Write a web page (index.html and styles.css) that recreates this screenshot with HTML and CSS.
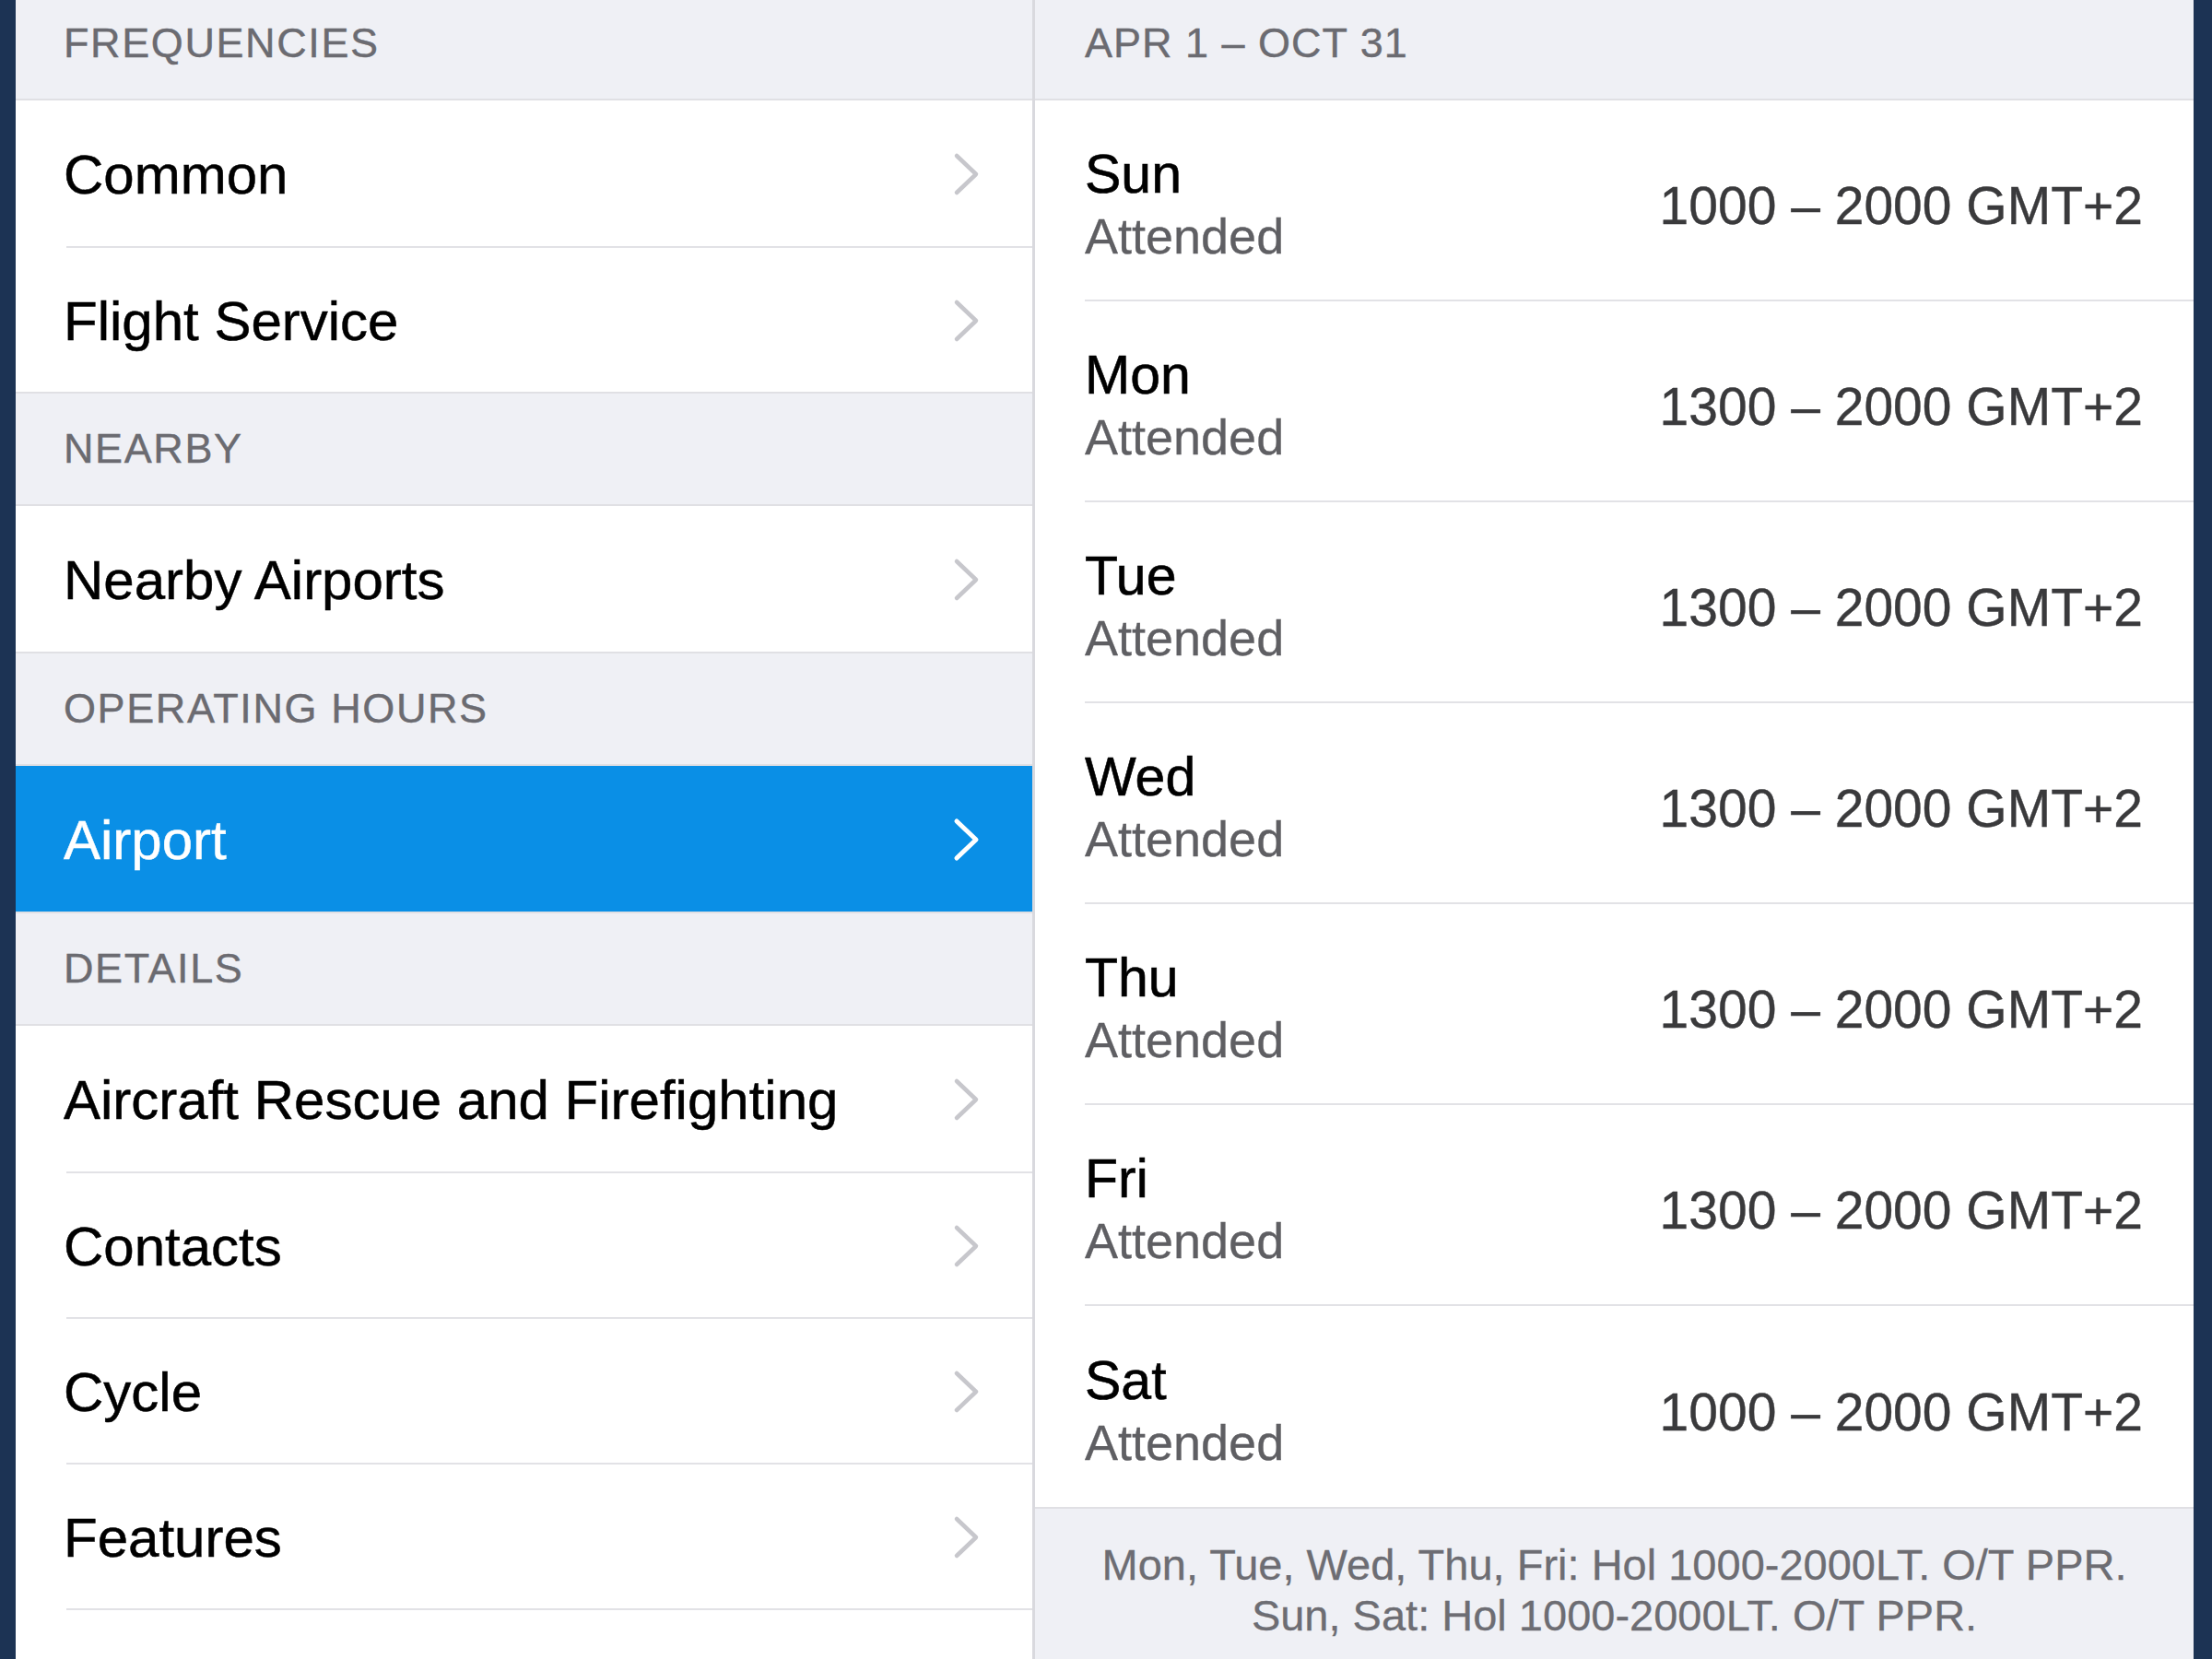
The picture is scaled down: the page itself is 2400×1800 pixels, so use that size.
FILE: index.html
```html
<!DOCTYPE html>
<html lang="en">
<head>
<meta charset="utf-8">
<title>Airport Operating Hours</title>
<link rel="stylesheet" href="styles.css">
</head>
<body>
<div class="app">
  <div class="edge"></div>

  <aside class="sidebar">
    <div class="list">
      <div class="section-header">FREQUENCIES</div>
      <div class="group">
        <div class="row"><span class="label">Common</span><svg class="chev" viewBox="0 0 32 48"><polyline points="6,4 27,24 6,44"/></svg></div>
        <div class="row"><span class="label">Flight Service</span><svg class="chev" viewBox="0 0 32 48"><polyline points="6,4 27,24 6,44"/></svg></div>
      </div>

      <div class="section-header">NEARBY</div>
      <div class="group">
        <div class="row"><span class="label">Nearby Airports</span><svg class="chev" viewBox="0 0 32 48"><polyline points="6,4 27,24 6,44"/></svg></div>
      </div>

      <div class="section-header">OPERATING HOURS</div>
      <div class="group selected">
        <div class="row"><span class="label">Airport</span><svg class="chev" viewBox="0 0 32 48"><polyline points="6,4 27,24 6,44"/></svg></div>
      </div>

      <div class="section-header">DETAILS</div>
      <div class="group">
        <div class="row"><span class="label">Aircraft Rescue and Firefighting</span><svg class="chev" viewBox="0 0 32 48"><polyline points="6,4 27,24 6,44"/></svg></div>
        <div class="row"><span class="label">Contacts</span><svg class="chev" viewBox="0 0 32 48"><polyline points="6,4 27,24 6,44"/></svg></div>
        <div class="row"><span class="label">Cycle</span><svg class="chev" viewBox="0 0 32 48"><polyline points="6,4 27,24 6,44"/></svg></div>
        <div class="row"><span class="label">Features</span><svg class="chev" viewBox="0 0 32 48"><polyline points="6,4 27,24 6,44"/></svg></div>
        <div class="row"></div>
      </div>
    </div>
  </aside>

  <main class="detail">
    <div class="list">
      <div class="section-header detail-header">APR 1 – OCT 31</div>
      <div class="hours">
        <div class="hour-row"><div class="day"><span class="day-name">Sun</span><span class="day-status">Attended</span></div><span class="time">1000 – 2000 GMT+2</span></div>
        <div class="hour-row"><div class="day"><span class="day-name">Mon</span><span class="day-status">Attended</span></div><span class="time">1300 – 2000 GMT+2</span></div>
        <div class="hour-row"><div class="day"><span class="day-name">Tue</span><span class="day-status">Attended</span></div><span class="time">1300 – 2000 GMT+2</span></div>
        <div class="hour-row"><div class="day"><span class="day-name">Wed</span><span class="day-status">Attended</span></div><span class="time">1300 – 2000 GMT+2</span></div>
        <div class="hour-row"><div class="day"><span class="day-name">Thu</span><span class="day-status">Attended</span></div><span class="time">1300 – 2000 GMT+2</span></div>
        <div class="hour-row"><div class="day"><span class="day-name">Fri</span><span class="day-status">Attended</span></div><span class="time">1300 – 2000 GMT+2</span></div>
        <div class="hour-row"><div class="day"><span class="day-name">Sat</span><span class="day-status">Attended</span></div><span class="time">1000 – 2000 GMT+2</span></div>
      </div>
      <div class="footnote">
        <div>Mon, Tue, Wed, Thu, Fri: Hol 1000-2000LT. O/T PPR.</div>
        <div>Sun, Sat: Hol 1000-2000LT. O/T PPR.</div>
      </div>
    </div>
  </main>

  <div class="edge edge-right"></div>
</div>
</body>
</html>
```

FILE: styles.css
```css
* {
  box-sizing: border-box;
}

html, body {
  margin: 0;
  padding: 0;
}

body {
  width: 2400px;
  height: 1800px;
  overflow: hidden;
  background: #1c3354;
  font-family: "Liberation Sans", Arial, Helvetica, sans-serif;
  color: #000;
}

.app {
  display: flex;
  width: 2400px;
  height: 1800px;
  overflow: hidden;
}

.edge {
  width: 17px;
  flex: none;
  background: #1c3354;
}

.edge-right {
  width: 20px;
}

.sidebar {
  width: 1103px;
  flex: none;
  background: #ffffff;
  overflow: hidden;
}

.detail {
  flex: 1;
  background: #ffffff;
  border-left: 3px solid #d9d9de;
  overflow: hidden;
}

.list {
  margin-top: -15px;
  display: flex;
  flex-direction: column;
  height: calc(100% + 15px);
}

.section-header {
  height: 124px;
  flex: none;
  display: flex;
  align-items: center;
  padding-left: 52px;
  background: #eff0f5;
  border-top: 2px solid #e0e0e4;
  border-bottom: 2px solid #e0e0e4;
  color: #6b6b71;
  font-size: 45px;
  letter-spacing: 1.6px;
  -webkit-text-stroke: 0.4px #6b6b71;
}

.detail-header {
  padding-left: 54px;
  letter-spacing: 1px;
}

.group {
  background: #ffffff;
}

.group.selected {
  background: #0a8fe6;
}

.row {
  height: 158px;
  margin-left: 55px;
  padding-right: 56px;
  padding-top: 2px;
  display: flex;
  align-items: center;
  justify-content: space-between;
  border-top: 2px solid #e2e2e6;
}

.row:first-child {
  border-top: none;
}

.label {
  margin-left: -3px;
  font-size: 60px;
  color: #000;
  -webkit-text-stroke: 0.5px #000;
}

.chev {
  width: 32px;
  height: 48px;
  flex: none;
}

.chev polyline {
  fill: none;
  stroke: #c7c7cc;
  stroke-width: 4.5;
  stroke-linecap: round;
  stroke-linejoin: round;
}

.selected .label {
  color: #ffffff;
  -webkit-text-stroke: 0.5px #ffffff;
}

.selected .chev polyline {
  stroke: #ffffff;
  stroke-width: 5;
}

.hours {
  flex: none;
}

.hour-row {
  height: 218px;
  margin-left: 54px;
  padding-right: 55px;
  padding-top: 12px;
  display: flex;
  align-items: center;
  justify-content: space-between;
  border-bottom: 2px solid #e2e2e6;
}

.hour-row:last-child {
  border-bottom: none;
}

.day {
  display: flex;
  flex-direction: column;
}

.day-name {
  font-size: 59px;
  line-height: 67px;
  color: #000;
  -webkit-text-stroke: 0.6px #000;
}

.day-status {
  font-size: 54px;
  line-height: 67px;
  color: #5f5f63;
  -webkit-text-stroke: 0.3px #5f5f63;
}

.time {
  font-size: 57px;
  line-height: 66px;
  color: #3a3a3c;
  -webkit-text-stroke: 0.4px #3a3a3c;
}

.footnote {
  flex: 1;
  background: #eff0f5;
  border-top: 2px solid #e0e0e4;
  padding-top: 33px;
  text-align: center;
  font-size: 47px;
  line-height: 55px;
  color: #6d6d73;
  -webkit-text-stroke: 0.3px #6d6d73;
}
```
